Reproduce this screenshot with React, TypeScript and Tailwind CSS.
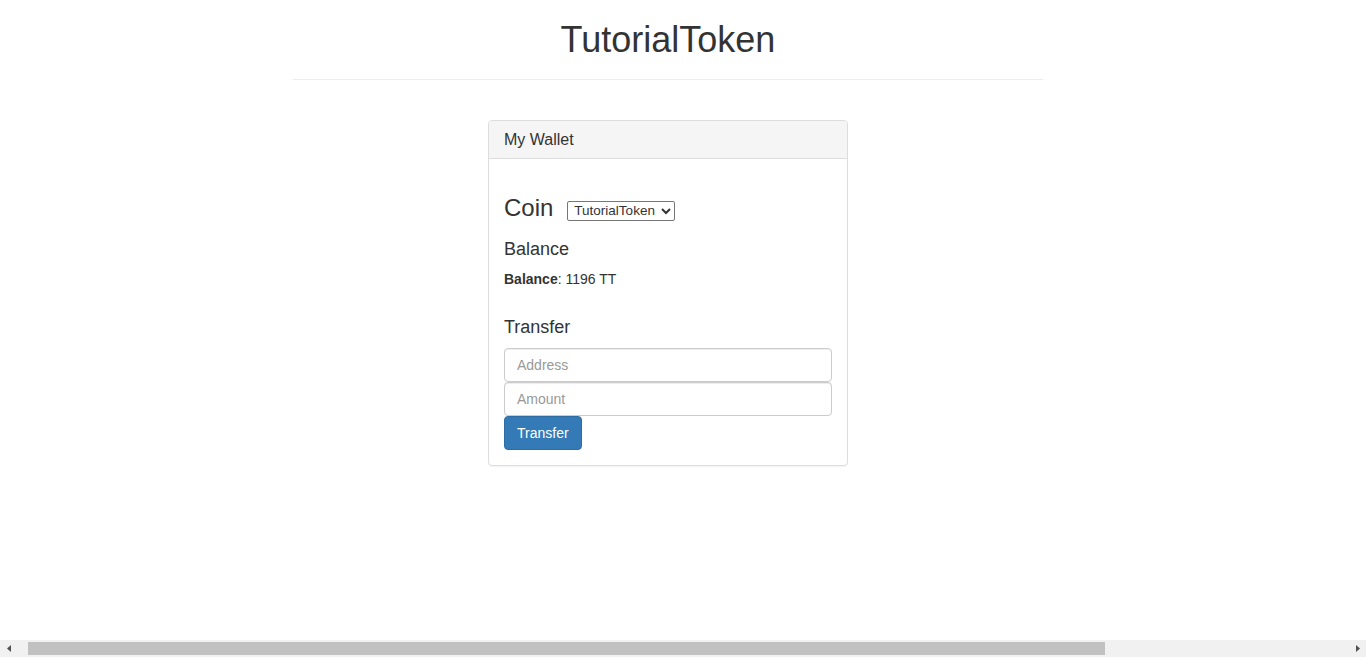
import { useState } from 'react'

export default function App() {
  const [address, setAddress] = useState('')
  const [amount, setAmount] = useState('')

  return (
    <div className="h-[657px] flex flex-col bg-white text-[#333] font-['Liberation_Sans',Arial,sans-serif] text-[14px] leading-[20px] overflow-hidden">
      <div className="flex-1 w-[1336px]">
        <div className="mx-auto w-[750px]">
          <header className="pb-[9px] mb-[40px] border-b border-[#eee]">
            <h1 className="mt-[20px] mb-[10px] text-[36px] leading-[1.1] text-center font-normal">TutorialToken</h1>
          </header>

          <div className="mx-auto w-[360px] border border-[#ddd] rounded-[4px] shadow-[0_1px_1px_rgba(0,0,0,0.05)]">
            <div className="h-[38px] px-[15px] pt-[2px] flex items-center bg-[#f5f5f5] border-b border-[#ddd] rounded-t-[3px] text-[16px]">
              My Wallet
            </div>
            <div className="p-[15px]">
              <div className="mt-[22px] mb-[18px] flex items-center h-[26px]">
                <h3 className="text-[24px] leading-[1.1]">Coin</h3>
                <select className="ml-[14px] mt-[4px] h-[20px] w-[108px] border border-[#767676] rounded-[2px] text-[13.5px] leading-none text-[#333] px-[2px] bg-white">
                  <option>TutorialToken</option>
                </select>
              </div>
              <h4 className="mb-[10px] text-[18px] leading-[1.1]">Balance</h4>
              <p className="mb-[10px]">
                <strong className="font-bold">Balance</strong>: 1196 TT
              </p>
              <h4 className="mt-[29px] mb-[10px] text-[18px] leading-[1.1]">Transfer</h4>
              <div className="flex flex-col">
                <input
                  value={address}
                  onChange={(e) => setAddress(e.target.value)}
                  placeholder="Address"
                  className="h-[34px] px-[12px] border border-[#ccc] rounded-[4px] shadow-[inset_0_1px_1px_rgba(0,0,0,0.075)] placeholder:text-[#999] outline-none"
                />
                <input
                  value={amount}
                  onChange={(e) => setAmount(e.target.value)}
                  placeholder="Amount"
                  className="h-[34px] px-[12px] border border-[#ccc] rounded-[4px] shadow-[inset_0_1px_1px_rgba(0,0,0,0.075)] placeholder:text-[#999] outline-none"
                />
                <div>
                  <button className="h-[34px] px-[12px] bg-[#337ab7] border border-[#2e6da4] rounded-[4px] text-white text-[14px]">
                    Transfer
                  </button>
                </div>
              </div>
            </div>
          </div>
        </div>
      </div>

      {/* horizontal scrollbar */}
      <div className="h-[17px] bg-[#f1f1f1] flex items-center">
        <div className="w-[17px] h-[17px] flex items-center justify-center">
          <svg width="4" height="7" viewBox="0 0 4 7">
            <path d="M4 0 L0 3.5 L4 7 Z" fill="#505050" />
          </svg>
        </div>
        <div className="ml-[11px] w-[1077px] h-[13px] bg-[#c1c1c1]" />
        <div className="flex-1" />
        <div className="w-[17px] h-[17px] flex items-center justify-center">
          <svg width="4" height="7" viewBox="0 0 4 7">
            <path d="M0 0 L4 3.5 L0 7 Z" fill="#505050" />
          </svg>
        </div>
      </div>
    </div>
  )
}
